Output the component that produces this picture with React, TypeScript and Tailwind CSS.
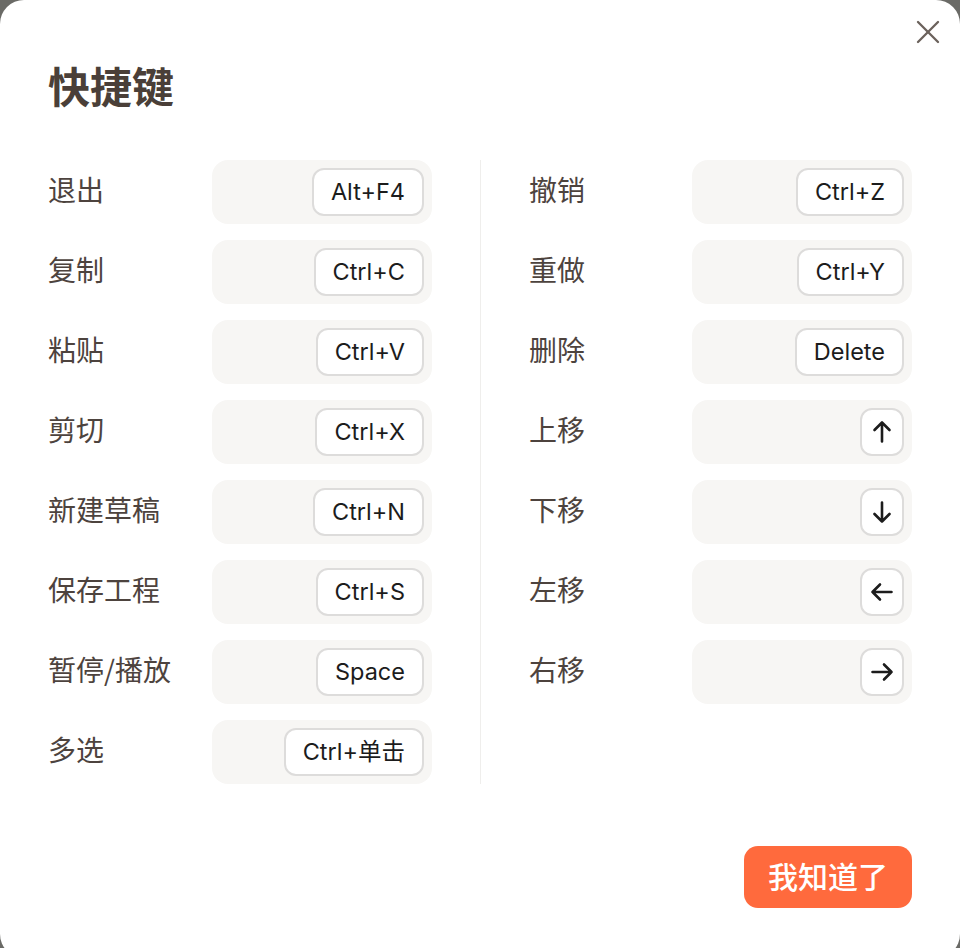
import { X } from 'lucide-react';
import type { ReactNode } from 'react';

type Shortcut = { label: string; keys: ReactNode; icon?: boolean };

function Arrow({ rotate }: { rotate: string }) {
  return (
    <svg
      width="24"
      height="24"
      viewBox="0 0 24 24"
      fill="none"
      stroke="#1c1c1c"
      strokeWidth="2.6"
      strokeLinecap="round"
      strokeLinejoin="round"
      className={rotate}
    >
      <path d="M12 2.5V21.5M4.5 10L12 2.5L19.5 10" />
    </svg>
  );
}

const left: Shortcut[] = [
  { label: '退出', keys: 'Alt+F4' },
  { label: '复制', keys: 'Ctrl+C' },
  { label: '粘贴', keys: 'Ctrl+V' },
  { label: '剪切', keys: 'Ctrl+X' },
  { label: '新建草稿', keys: 'Ctrl+N' },
  { label: '保存工程', keys: 'Ctrl+S' },
  { label: '暂停/播放', keys: 'Space' },
  { label: '多选', keys: 'Ctrl+单击' },
];

const right: Shortcut[] = [
  { label: '撤销', keys: 'Ctrl+Z' },
  { label: '重做', keys: 'Ctrl+Y' },
  { label: '删除', keys: 'Delete' },
  { label: '上移', keys: <Arrow rotate="" />, icon: true },
  { label: '下移', keys: <Arrow rotate="rotate-180" />, icon: true },
  { label: '左移', keys: <Arrow rotate="-rotate-90" />, icon: true },
  { label: '右移', keys: <Arrow rotate="rotate-90" />, icon: true },
];

function Row({ item }: { item: Shortcut }) {
  return (
    <div className="flex items-center h-16">
      <div className="flex-1 pb-1.5 text-[28px] leading-none text-[#4d433e]">{item.label}</div>
      <div className="w-[220px] h-16 rounded-2xl bg-[#f7f6f4] flex items-center justify-end pr-2">
        <div
          className={
            'h-12 rounded-xl border-2 border-[#dddcdb] bg-white flex items-center justify-center text-[23.5px] text-[#1c1c1c] ' +
            (item.icon ? 'w-11' : 'px-[17px]')
          }
          style={{ fontFamily: 'Inter, "Noto Sans CJK SC", sans-serif' }}
        >
          {item.keys}
        </div>
      </div>
    </div>
  );
}

export default function App() {
  return (
    <div
      className="h-[948px] w-[960px] overflow-hidden bg-[#6a6a66]"
      style={{ fontFamily: '"Noto Sans CJK SC", "Noto Sans", sans-serif' }}
    >
      <div className="relative h-[958px] rounded-[24px] bg-white px-12 pt-[64px]">
        <button className="absolute right-[12px] top-[12px] p-0 text-[#6b625c]">
          <X size={40} strokeWidth={1.4} />
        </button>

        <h1 className="text-[42px] leading-[42px] font-bold text-[#4a3f38]">快捷键</h1>

        <div className="mt-[54px] flex">
          <div className="w-[384px] flex flex-col gap-4">
            {left.map((s) => (
              <Row key={s.label} item={s} />
            ))}
          </div>
          <div className="mx-12 w-px bg-[#efeeec]" />
          <div className="w-[383px] flex flex-col gap-4">
            {right.map((s) => (
              <Row key={s.label} item={s} />
            ))}
          </div>
        </div>

        <div className="mt-[62px] flex justify-end">
          <button className="h-[62px] w-[168px] rounded-[14px] bg-[#ff6a3d] pb-1 text-[30px] leading-none font-medium text-white">
            我知道了
          </button>
        </div>
      </div>
    </div>
  );
}
